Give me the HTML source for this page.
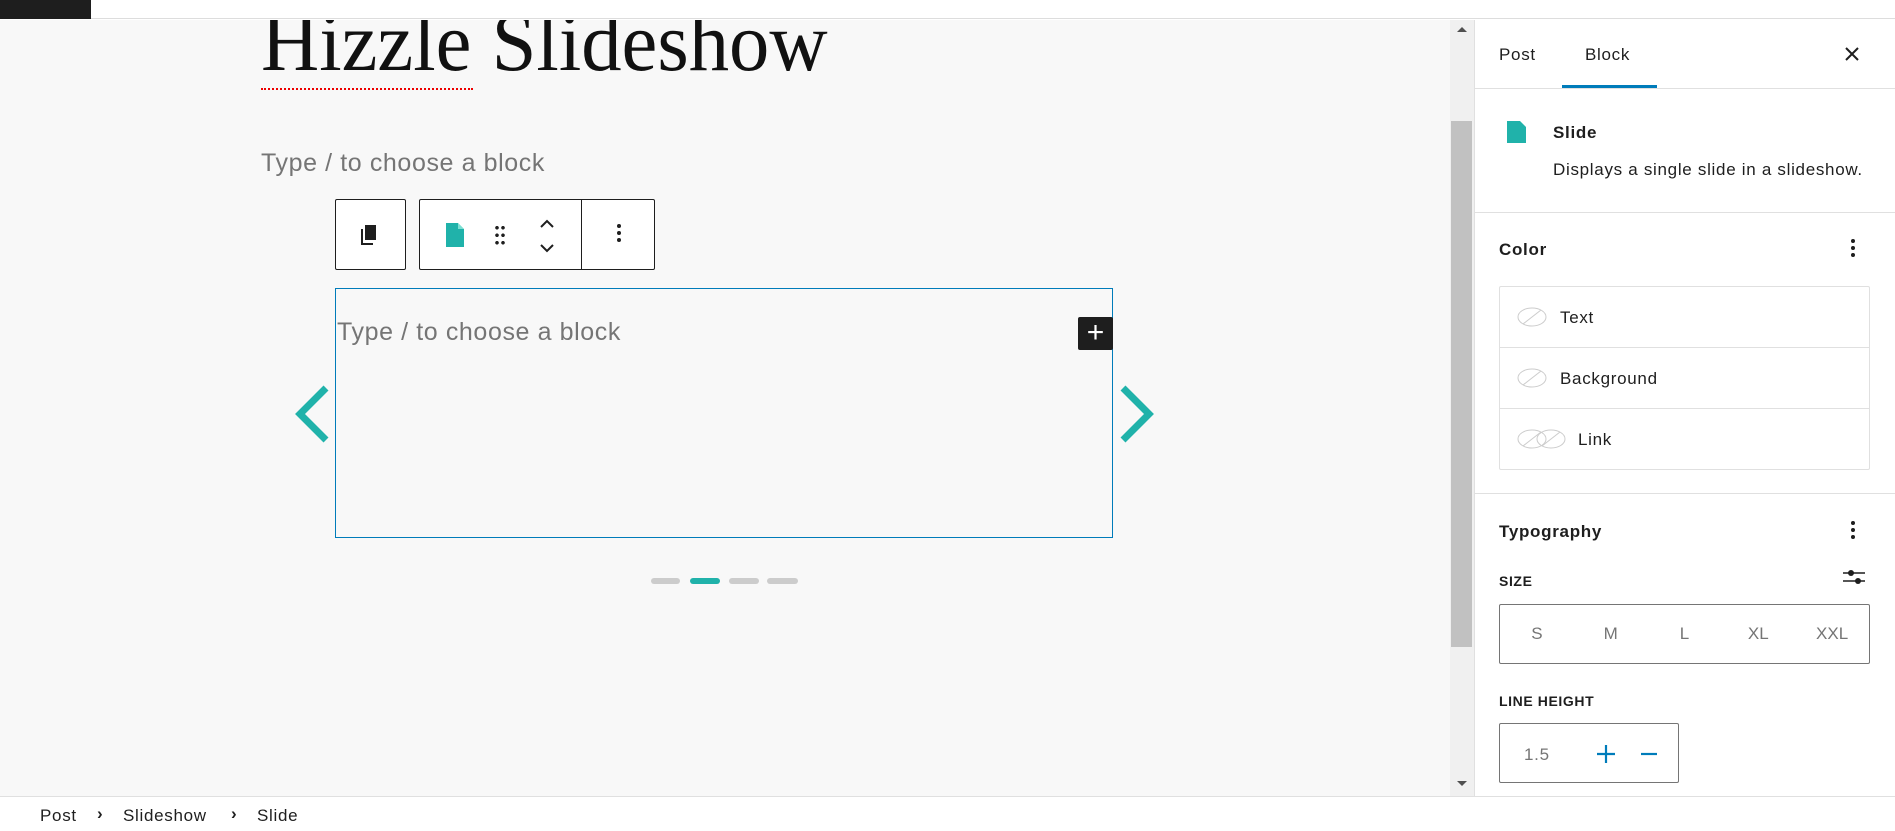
<!DOCTYPE html>
<html><head><meta charset="utf-8"><style>
*{box-sizing:border-box;margin:0;padding:0}
body{width:1895px;height:831px;overflow:hidden;background:#fff;font-family:"Liberation Sans",sans-serif;position:relative;color:#1e1e1e}
.a{position:absolute}
.ph{color:#757575;font-size:25px;white-space:nowrap;letter-spacing:0.6px}
.sb{font-size:17px;white-space:nowrap;letter-spacing:0.7px}
.dots{position:absolute;width:4px}
.dots i{display:block;width:4px;height:4px;border-radius:2px;background:#1e1e1e;margin-bottom:3px}
</style></head><body>
<div class="a" style="left:0;top:0;width:1895px;height:19px;background:#fff;border-bottom:1px solid #ddd"></div>
<div class="a" style="left:0;top:0;width:91px;height:19px;background:#1e1e1e"></div>
<div class="a" style="left:0;top:20px;width:1450px;height:776px;background:#f8f8f8;overflow:hidden">
 <div class="a" style="left:261px;top:-26px;font-family:'Liberation Serif',serif;font-size:84px;white-space:nowrap;color:#111;transform:scaleX(0.96);transform-origin:left">Hizzle Slideshow</div>
 <div class="a" style="left:261px;top:67px;width:212px;height:3px;border-bottom:2px dotted #e00"></div>
 <div class="a ph" style="left:261px;top:129px">Type / to choose a block</div>
 <div class="a" style="left:335px;top:179px;width:71px;height:71px;border:1px solid #1e1e1e;border-radius:2px;background:#fff">
  <svg class="a" style="left:23px;top:24px" width="22" height="22" viewBox="0 0 22 22"><rect x="6" y="1" width="11" height="15" fill="#1e1e1e"/><path d="M3 5v15h11" stroke="#1e1e1e" stroke-width="2" fill="none"/></svg>
 </div>
 <div class="a" style="left:419px;top:179px;width:236px;height:71px;border:1px solid #1e1e1e;border-radius:2px;background:#fff">
  <svg class="a" style="left:26px;top:23px" width="18" height="24" viewBox="0 0 18 24"><path d="M0 0h12l6 6v18H0z" fill="#20b2aa"/><path d="M12 0v6h6" fill="#bfe" opacity=".6"/></svg>
  <div class="a" style="left:74px;top:24px;width:12px;height:22px;background:radial-gradient(circle,#1e1e1e 1.6px,transparent 2px) 0 0/6px 7.5px"></div>
  <svg class="a" style="left:116px;top:16px" width="22" height="40" viewBox="0 0 22 40"><path d="M5 11l6-6 6 6M5 29l6 6 6-6" stroke="#1e1e1e" stroke-width="2" fill="none"/></svg>
  <div class="a" style="left:161px;top:-1px;width:1px;height:71px;background:#1e1e1e"></div>
  <div class="dots" style="left:197px;top:24px"><i></i><i></i><i></i></div>
 </div>
 <div class="a" style="left:335px;top:268px;width:778px;height:250px;border:1px solid #007cba"></div>
 <div class="a ph" style="left:337px;top:298px">Type / to choose a block</div>
 <div class="a" style="left:1078px;top:297px;width:35px;height:33px;background:#1e1e1e;border-radius:2px;color:#fff;font-size:30px;line-height:32px;text-align:center">+</div>
 <svg class="a" style="left:292px;top:364px" width="40" height="60" viewBox="0 0 40 60"><path d="M34 4L8 30l26 26" stroke="#20b2aa" stroke-width="7" fill="none"/></svg>
 <svg class="a" style="left:1117px;top:364px" width="40" height="60" viewBox="0 0 40 60"><path d="M6 4l26 26L6 56" stroke="#20b2aa" stroke-width="7" fill="none"/></svg>
 <div class="a" style="left:651px;top:558px;width:29px;height:6px;border-radius:3px;background:#ccc"></div>
 <div class="a" style="left:690px;top:558px;width:30px;height:6px;border-radius:3px;background:#20b2aa"></div>
 <div class="a" style="left:729px;top:558px;width:30px;height:6px;border-radius:3px;background:#ccc"></div>
 <div class="a" style="left:767px;top:558px;width:31px;height:6px;border-radius:3px;background:#ccc"></div>
</div>
<div class="a" style="left:1450px;top:20px;width:24px;height:776px;background:#f0f0f0"></div>
<div class="a" style="left:1451px;top:121px;width:21px;height:526px;background:#c1c1c1"></div>
<div class="a" style="left:1457px;top:27px;border:5px solid transparent;border-bottom-color:#505050;border-top:0"></div>
<div class="a" style="left:1457px;top:781px;border:5px solid transparent;border-top-color:#505050;border-bottom:0"></div>
<div class="a" style="left:1474px;top:20px;width:1px;height:776px;background:#e0e0e0"></div>
<!-- sidebar -->
<div class="a sb" style="left:1499px;top:45px">Post</div>
<div class="a sb" style="left:1585px;top:45px">Block</div>
<div class="a" style="left:1562px;top:85px;width:95px;height:3px;background:#007cba"></div>
<div class="a" style="left:1475px;top:88px;width:420px;height:1px;background:#e0e0e0"></div>
<svg class="a" style="left:1844px;top:46px" width="16" height="16" viewBox="0 0 16 16"><path d="M2 2l12 12M14 2L2 14" stroke="#1e1e1e" stroke-width="2"/></svg>
<svg class="a" style="left:1507px;top:121px" width="19" height="22" viewBox="0 0 19 22"><path d="M0 0h13l6 6v16H0z" fill="#20b2aa"/></svg>
<div class="a sb" style="left:1553px;top:123px;font-weight:bold">Slide</div>
<div class="a sb" style="left:1553px;top:160px">Displays a single slide in a slideshow.</div>
<div class="a" style="left:1475px;top:212px;width:420px;height:1px;background:#e0e0e0"></div>
<div class="a sb" style="left:1499px;top:240px;font-weight:bold">Color</div>
<div class="dots" style="left:1851px;top:239px"><i></i><i></i><i></i></div>
<div class="a" style="left:1499px;top:286px;width:371px;height:184px;border:1px solid #e0e0e0;border-radius:2px"></div>
<div class="a" style="left:1500px;top:347px;width:369px;height:1px;background:#e0e0e0"></div>
<div class="a" style="left:1500px;top:408px;width:369px;height:1px;background:#e0e0e0"></div>
<svg class="a" style="left:1517px;top:302px" width="34" height="30"><ellipse cx="15" cy="15" rx="14" ry="9" fill="none" stroke="#ccc"/><path d="M6 22L24 8" stroke="#ccc"/></svg>
<div class="a sb" style="left:1560px;top:308px">Text</div>
<svg class="a" style="left:1517px;top:363px" width="34" height="30"><ellipse cx="15" cy="15" rx="14" ry="9" fill="none" stroke="#ccc"/><path d="M6 22L24 8" stroke="#ccc"/></svg>
<div class="a sb" style="left:1560px;top:369px">Background</div>
<svg class="a" style="left:1517px;top:424px" width="54" height="30"><ellipse cx="15" cy="15" rx="14" ry="9" fill="none" stroke="#ccc"/><path d="M6 22L24 8" stroke="#ccc"/><ellipse cx="34" cy="15" rx="14" ry="9" fill="none" stroke="#ccc"/><path d="M25 22L43 8" stroke="#ccc"/></svg>
<div class="a sb" style="left:1578px;top:430px">Link</div>
<div class="a" style="left:1475px;top:493px;width:420px;height:1px;background:#e0e0e0"></div>
<div class="a sb" style="left:1499px;top:522px;font-weight:bold">Typography</div>
<div class="dots" style="left:1851px;top:521px"><i></i><i></i><i></i></div>
<div class="a" style="left:1499px;top:573px;font-size:14px;font-weight:bold;letter-spacing:0.6px">SIZE</div>
<svg class="a" style="left:1842px;top:567px" width="24" height="20"><path d="M1 6h22M1 14h22" stroke="#1e1e1e" stroke-width="1.5"/><circle cx="9" cy="6" r="3" fill="#1e1e1e"/><circle cx="16" cy="14" r="3" fill="#1e1e1e"/></svg>
<div class="a" style="left:1499px;top:604px;width:371px;height:60px;border:1px solid #757575;border-radius:2px;display:flex;color:#757575;font-size:17px;line-height:58px;text-align:center">
<span style="flex:1">S</span><span style="flex:1">M</span><span style="flex:1">L</span><span style="flex:1">XL</span><span style="flex:1">XXL</span></div>
<div class="a" style="left:1499px;top:693px;font-size:14px;font-weight:bold;letter-spacing:0.6px">LINE HEIGHT</div>
<div class="a" style="left:1499px;top:723px;width:180px;height:60px;border:1px solid #757575;border-radius:2px"></div>
<div class="a sb" style="left:1524px;top:745px;color:#757575">1.5</div>
<svg class="a" style="left:1596px;top:744px" width="20" height="20"><path d="M1 10h18M10 1v18" stroke="#007cba" stroke-width="2.2"/></svg>
<svg class="a" style="left:1640px;top:744px" width="18" height="20"><path d="M1 10h16" stroke="#007cba" stroke-width="2.2"/></svg>
<!-- footer -->
<div class="a" style="left:0;top:796px;width:1895px;height:35px;background:#fff;border-top:1px solid #e0e0e0"></div>
<div class="a sb" style="left:40px;top:806px">Post</div>
<div class="a sb" style="left:97px;top:804px;font-weight:bold">›</div>
<div class="a sb" style="left:123px;top:806px">Slideshow</div>
<div class="a sb" style="left:231px;top:804px;font-weight:bold">›</div>
<div class="a sb" style="left:257px;top:806px">Slide</div>
</body></html>
